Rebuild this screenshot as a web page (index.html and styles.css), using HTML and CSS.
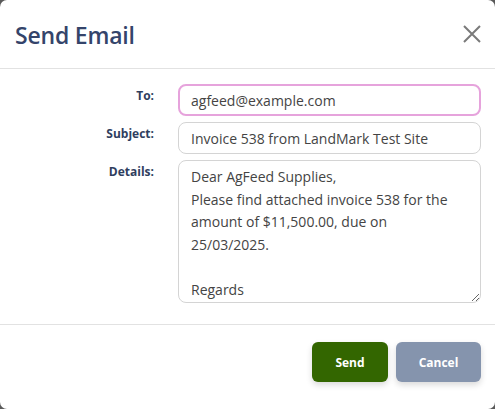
FILE: index.html
```html
<!DOCTYPE html>
<html>
<head>
<meta charset="utf-8">
<link rel="stylesheet" href="styles.css">
</head>
<body>
<div class="modal">
  <div class="modal-header">
    <h2 class="title">Send Email</h2>
    <button class="close" aria-label="Close">
      <svg width="20" height="20" viewBox="0 0 20 20"><path d="M2 2 L18 18 M18 2 L2 18" stroke="#7a7a7a" stroke-width="2" fill="none"/></svg>
    </button>
  </div>
  <div class="modal-body">
    <div class="row">
      <label class="label">To:</label>
      <input class="field focus" type="text" value="agfeed@example.com">
    </div>
    <div class="row">
      <label class="label">Subject:</label>
      <input class="field" type="text" value="Invoice 538 from LandMark Test Site">
    </div>
    <div class="row">
      <label class="label">Details:</label>
      <textarea class="field area">Dear AgFeed Supplies,
Please find attached invoice 538 for the amount of $11,500.00, due on 25/03/2025.

Regards</textarea>
    </div>
  </div>
  <div class="modal-footer">
    <button class="btn send">Send</button>
    <button class="btn cancel">Cancel</button>
  </div>
</div>
</body>
</html>
```
FILE: styles.css
```css
html, body {
  margin: 0;
  padding: 0;
  background: #5a5a5a;
  height: 100%;
}
body {
  font-family: "Open Sans", "Noto Sans", sans-serif;
}
.modal {
  background: #fff;
  width: 495px;
  height: 409px;
  border-radius: 7px;
  box-sizing: border-box;
  display: flex;
  flex-direction: column;
}
.modal-header {
  height: 69px;
  flex: none;
  box-sizing: border-box;
  border-bottom: 1px solid #e2e2e2;
  display: flex;
  align-items: center;
  justify-content: space-between;
  padding: 0 13px 0 15px;
}
.title {
  margin: 0;
  font-size: 23px;
  font-weight: 600;
  color: #34446a;
  letter-spacing: -0.2px;
  padding-top: 1px;
}
.close {
  background: none;
  border: 0;
  padding: 0;
  width: 20px;
  height: 20px;
  display: flex;
  cursor: pointer;
}
.modal-body {
  padding: 15px 14px 21px 0;
  display: flex;
  flex-direction: column;
  gap: 6px;
  border-bottom: 1px solid #e2e2e2;
}
.row {
  display: flex;
  align-items: flex-start;
}
.label {
  width: 154px;
  flex: none;
  text-align: right;
  font-size: 12px;
  font-weight: 700;
  color: #2f3e5e;
  padding-top: 3px;
  box-sizing: border-box;
  margin-right: 24px;
}
.field {
  flex: 1;
  height: 32px;
  box-sizing: border-box;
  border: 1px solid #d4d4d4;
  border-radius: 8px;
  padding: 0 12px;
  font-family: "Open Sans", "Noto Sans", sans-serif;
  font-size: 14px;
  color: #444;
  background: #fff;
  outline: none;
}
.field.focus {
  border: 2px solid #e6a3dc;
  padding: 0 11px;
}
.area {
  height: 143px;
  padding: 5px 12px 3px;
  line-height: 22.6px;
  resize: both;
  overflow: hidden;
}
.modal-footer {
  flex: 1;
  display: flex;
  justify-content: flex-end;
  align-items: flex-start;
  padding: 17px 14px 0 0;
  gap: 8px;
}
.btn {
  height: 40px;
  border: 0;
  border-radius: 6px;
  color: #fff;
  font-family: "Open Sans", "Noto Sans", sans-serif;
  font-weight: 700;
  font-size: 12px;
  box-shadow: 0 3px 6px rgba(0,0,0,0.15);
  cursor: pointer;
}
.send {
  width: 76px;
  background: #336600;
}
.cancel {
  width: 85px;
  background: #8594ad;
}
```
